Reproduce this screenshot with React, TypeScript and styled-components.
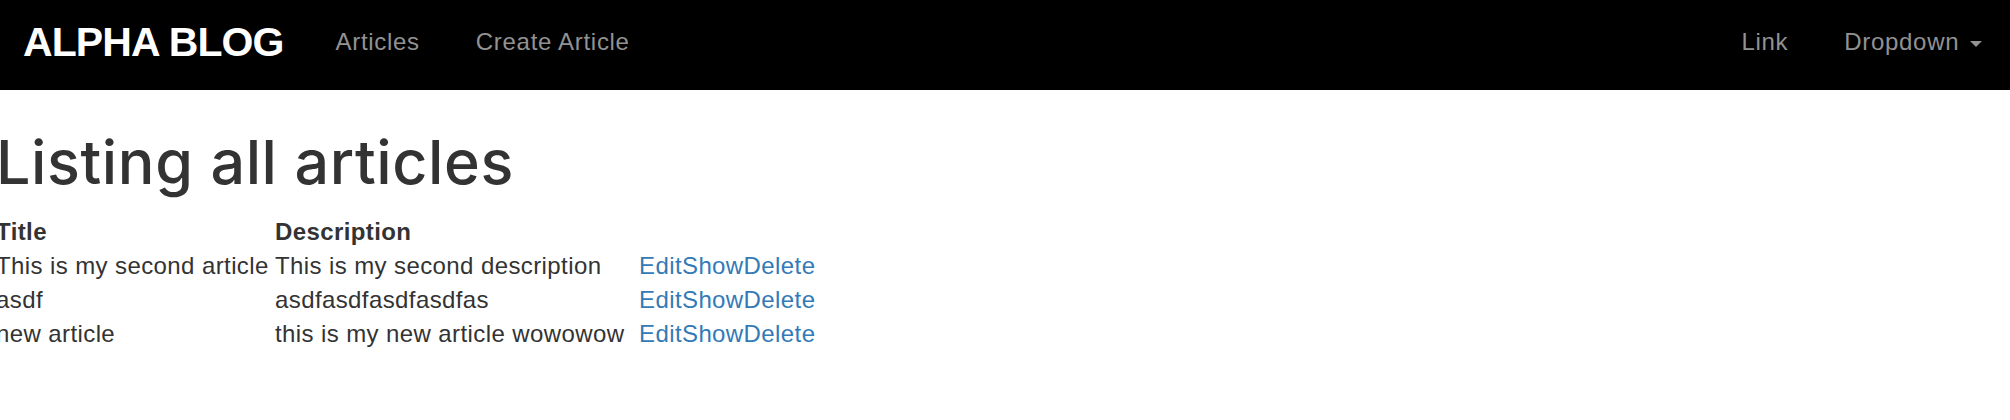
import React from 'react';
import styled, { createGlobalStyle } from 'styled-components';

const GlobalStyle = createGlobalStyle`
  body {
    margin: 0;
    background-color: #fff;
    color: #333;
    font-family: "Liberation Sans", Helvetica, Arial, sans-serif;
    font-size: 24px;
    line-height: 34px;
    letter-spacing: 0.4px;
  }
`

const Navbar = styled.nav`
  display: flex;
  align-items: flex-start;
  height: 90px;
  background-color: #000;
  overflow: hidden;
`

const Brand = styled.a`
  display: block;
  padding: 22px 24px 0 23px;
  color: #fff;
  font-size: 41px;
  line-height: 41px;
  font-weight: bold;
  letter-spacing: -0.9px;
  text-transform: uppercase;
  text-decoration: none;
`

const NavGroup = styled.ul<{ $right?: boolean }>`
  display: flex;
  margin: 0;
  padding: 0;
  list-style: none;
  margin-left: ${(p) => (p.$right ? 'auto' : '0')};
`

const NavLink = styled.a`
  display: block;
  padding: 25px 28px 0;
  color: #929292;
  letter-spacing: 0.7px;
  text-decoration: none;
`

const Caret = styled.span`
  display: inline-block;
  width: 0;
  height: 0;
  margin-left: 3.4px;
  vertical-align: middle;
  border-top: 6.8px solid #929292;
  border-left: 6.8px solid transparent;
  border-right: 6.8px solid transparent;
`

const Main = styled.main`
  margin-left: -4px;
`

const Heading = styled.h1`
  margin: 39px 0 19px;
  font-family: Inter, "Liberation Sans", sans-serif;
  font-size: 61px;
  line-height: 1.1;
  font-weight: 500;
  letter-spacing: 0.6px;
  color: #333;
`

const Table = styled.table`
  border-collapse: collapse;
  border-spacing: 0;
`

const HeadCell = styled.th<{ $width?: number }>`
  padding: 0;
  text-align: left;
  font-weight: bold;
  ${(p) => p.$width && `width: ${p.$width}px;`}
`

const Cell = styled.td`
  padding: 0;
  white-space: nowrap;
`

const ActionLink = styled.a`
  color: #337ab7;
  text-decoration: none;
`

const articles = [
  { title: 'This is my second article', description: 'This is my second description' },
  { title: 'asdf', description: 'asdfasdfasdfasdfas' },
  { title: 'new article', description: 'this is my new article wowowow' },
];

export default function App() {
  return (
    <>
      <GlobalStyle />
      <Navbar>
        <Brand href="#">Alpha Blog</Brand>
        <NavGroup>
          <li><NavLink href="#">Articles</NavLink></li>
          <li><NavLink href="#">Create Article</NavLink></li>
        </NavGroup>
        <NavGroup $right>
          <li><NavLink href="#">Link</NavLink></li>
          <li><NavLink href="#">Dropdown <Caret /></NavLink></li>
        </NavGroup>
      </Navbar>
      <Main>
        <Heading>Listing all articles</Heading>
        <Table>
          <thead>
            <tr>
              <HeadCell $width={279}>Title</HeadCell>
              <HeadCell $width={364}>Description</HeadCell>
              <HeadCell></HeadCell>
            </tr>
          </thead>
          <tbody>
            {articles.map((a) => (
              <tr key={a.title}>
                <Cell>{a.title}</Cell>
                <Cell>{a.description}</Cell>
                <Cell>
                  <ActionLink href="#">Edit</ActionLink>
                  <ActionLink href="#">Show</ActionLink>
                  <ActionLink href="#">Delete</ActionLink>
                </Cell>
              </tr>
            ))}
          </tbody>
        </Table>
      </Main>
    </>
  );
}
